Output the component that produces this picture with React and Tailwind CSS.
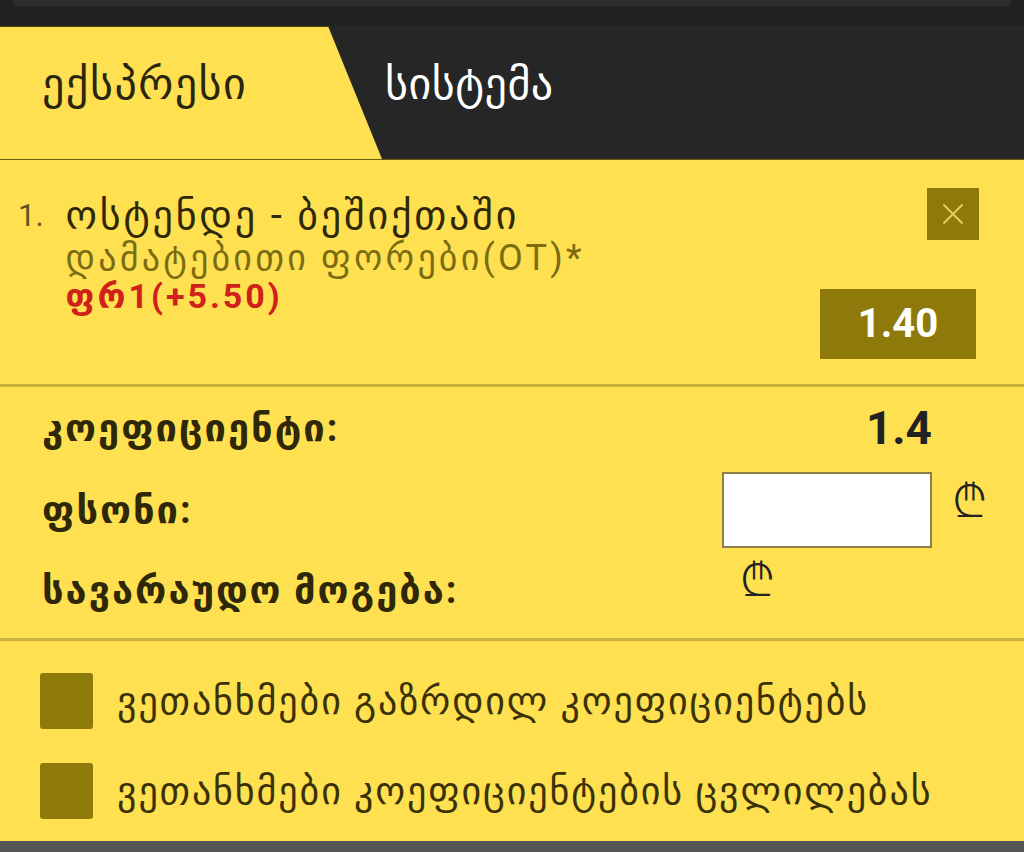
import React, { useState } from 'react';

const GEO = "font-['Roboto','DejaVu_Sans',sans-serif]";

function LariSign({ className = '' }) {
  return <span className={`font-['Noto_Sans','DejaVu_Sans',sans-serif] font-light text-[#222] ${className}`}>₾</span>;
}

function Check({ label }) {
  const [on, setOn] = useState(false);
  return (
    <button onClick={() => setOn(!on)} className="flex items-center gap-6 text-left">
      <span className="w-[53px] h-[56px] rounded-[3px] bg-[#8e7a0b] shrink-0" />
      <span className="text-[38px] tracking-[1.9px] text-[#3a3206] leading-none">{label}</span>
    </button>
  );
}

export default function App() {
  const [stake, setStake] = useState('');

  return (
    <div className={`w-[1024px] h-[852px] flex flex-col bg-[#fee051] overflow-hidden ${GEO}`}>
      {/* top strip */}
      <div className="h-[26px] bg-[#212121] shrink-0">
        <div className="h-[6px] mx-3 rounded-b-xl bg-[#2d2d2d]" />
      </div>

      {/* tabs */}
      <div className="h-[134px] flex bg-[#262626] shrink-0 border-b border-[#6b5d10]">
        <div className="w-[382px] bg-[#fee051] border-t border-[#4a4010] [clip-path:polygon(0_0,328px_0,100%_100%,0_100%)] flex items-center pl-[42px] pb-[18px]">
          <span className="text-[44px] tracking-[1.5px] text-[#2b2610] leading-none">ექსპრესი</span>
        </div>
        <div className="flex items-center pl-[3px] pb-[18px]">
          <span className="text-[44px] tracking-[0.5px] text-white leading-none">სისტემა</span>
        </div>
      </div>

      {/* bet item */}
      <div className="h-[224px] flex justify-between pl-[18px] pr-[48px] shrink-0">
        <div className="flex gap-[22px] pt-[34px]">
          <span className="text-[31px] text-[#5e5520] leading-[44px]">1.</span>
          <div className="flex flex-col">
            <span className="text-[40px] tracking-[2.8px] text-[#2e2808] leading-[44px] whitespace-nowrap">ოსტენდე - ბეშიქთაში</span>
            <span className="text-[36px] tracking-[3.2px] text-[#7b6c12] leading-[40px] whitespace-nowrap">დამატებითი ფორები(OT)*</span>
            <span className="text-[34px] tracking-[3px] font-bold text-[#d0201a] leading-[36px]">ფრ1(+5.50)</span>
          </div>
        </div>
        <div className="flex flex-col items-end pt-[26px]">
          <button className="w-[52px] h-[52px] mt-[2px] mr-[-3px] bg-[#8e7a0b] flex items-center justify-center">
            <svg width="24" height="24" viewBox="0 0 24 24" stroke="#e6d25c" strokeWidth="1.8" strokeLinecap="round">
              <path d="M3 3l18 18M21 3L3 21" />
            </svg>
          </button>
          <button className="w-[156px] h-[70px] mt-[49px] bg-[#8e7a0b] flex items-center justify-center text-white font-bold text-[40px] font-['Roboto',sans-serif]">
            1.40
          </button>
        </div>
      </div>

      <div className="h-[3px] bg-[#c9b23c] shrink-0" />

      {/* totals */}
      <div className="h-[251px] shrink-0 flex flex-col pl-[42px] pr-[37px] pt-[11px]">
        <div className="h-[60px] flex items-center justify-between">
          <span className="text-[38px] tracking-[2px] font-bold text-[#2e2808]">კოეფიციენტი:</span>
          <span className="text-[46px] font-bold text-[#222] font-['Roboto',sans-serif] mr-[55px]">1.4</span>
        </div>
        <div className="h-[80px] mt-[12px] flex items-center justify-between">
          <span className="text-[38px] tracking-[2px] font-bold text-[#2e2808]">ფსონი:</span>
          <div className="flex items-start gap-[20px]">
            <input
              value={stake}
              onChange={e => setStake(e.target.value)}
              className="w-[210px] h-[76px] bg-white border-2 border-[#8c7e45] outline-none px-3 text-[28px]"
            />
            <LariSign className="text-[46px] leading-none mt-[4px]" />
          </div>
        </div>
        <div className="h-[60px] mt-[10px] flex items-center">
          <span className="text-[38px] tracking-[2px] font-bold text-[#2e2808] w-[698px] whitespace-nowrap">სავარაუდო მოგება:</span>
          <LariSign className="text-[46px] leading-none -mt-[24px]" />
        </div>
      </div>

      <div className="h-[3px] bg-[#c9b23c] shrink-0" />

      {/* agreements */}
      <div className="flex-1 flex flex-col gap-[34px] pl-[40px] pt-[32px]">
        <Check label="ვეთანხმები გაზრდილ კოეფიციენტებს" />
        <Check label="ვეთანხმები კოეფიციენტების ცვლილებას" />
      </div>

      <div className="h-[11px] bg-[#555] shrink-0" />
    </div>
  );
}
